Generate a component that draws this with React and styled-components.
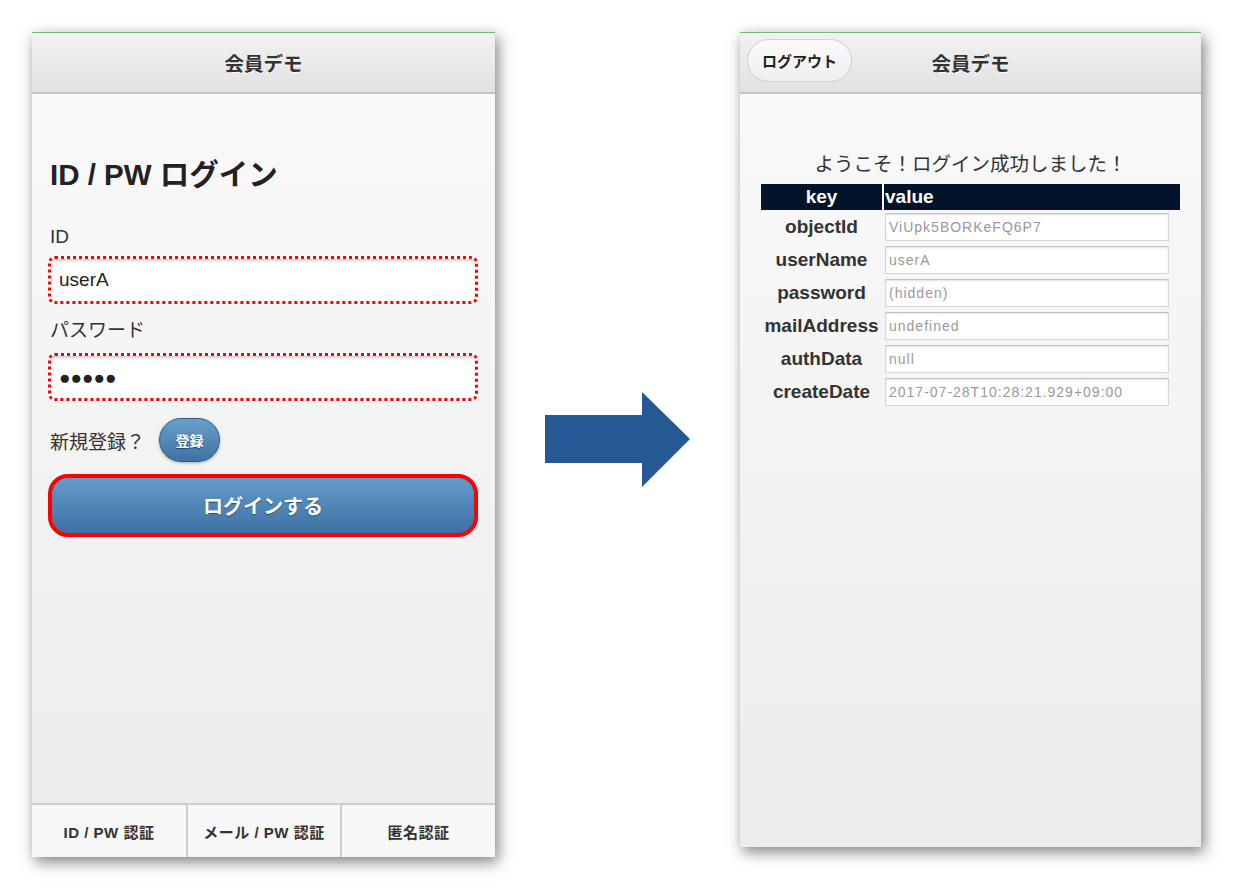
import styled, { createGlobalStyle } from "styled-components";

const GlobalStyle = createGlobalStyle`
  body {
    margin: 0;
    background: #ffffff;
    font-family: "Liberation Sans", "Noto Sans CJK JP", sans-serif;
  }
`;

const FONT = `"Liberation Sans", "Noto Sans CJK JP", sans-serif`;

const Stage = styled.div`
  display: flex;
  align-items: flex-start;
  padding: 32px 0 0 32px;
  width: 1234px;
  height: 890px;
  box-sizing: border-box;
`;

const Phone = styled.div`
  width: ${(p) => p.$w}px;
  height: ${(p) => p.$h}px;
  display: flex;
  flex-direction: column;
  border-top: 1px solid #7cb47c;
  background: linear-gradient(#fafafa, #ececec);
  box-shadow: 3px 5px 14px rgba(0, 0, 0, 0.5);
  font-family: ${FONT};
  color: #333;
  box-sizing: border-box;
`;

const Header = styled.div`
  position: relative;
  height: 61px;
  flex: none;
  display: flex;
  align-items: center;
  justify-content: center;
  background: linear-gradient(#f1f1f1, #e2e2e2);
  border-bottom: 2px solid #c4c4c4;
  box-sizing: border-box;
`;

const HeaderTitle = styled.div`
  font-size: 19.5px;
  font-weight: bold;
  color: #333;
  text-shadow: 0 1px 0 #fff;
`;

const LogoutButton = styled.div`
  position: absolute;
  left: 7px;
  top: 6px;
  width: 105px;
  height: 43px;
  border-radius: 22px;
  border: 1px solid #cfcfcf;
  background: linear-gradient(#fafafa, #efefef);
  display: flex;
  align-items: center;
  justify-content: center;
  font-size: 15px;
  font-weight: bold;
  color: #222;
  box-sizing: border-box;
`;

const Content = styled.div`
  flex: 1;
  display: flex;
  flex-direction: column;
  padding: ${(p) => p.$pad};
`;

const PageTitle = styled.h1`
  margin: 0 0 34px 0;
  font-size: 29.5px;
  font-weight: bold;
  color: #222;
  line-height: 32px;
`;

const Label = styled.div`
  font-size: 19px;
  color: #333;
  line-height: 24px;
  margin: 0 0 ${(p) => p.$mb}px 0;
`;

const Field = styled.div`
  height: 48px;
  margin: 0 -1px ${(p) => p.$mb}px -2px;
  border: 3px dotted #f00;
  border-radius: 7px;
  background: #fff;
  box-shadow: inset 0 2px 3px rgba(0, 0, 0, 0.18);
  display: flex;
  align-items: center;
  padding-left: 8px;
  font-size: 19px;
  color: #222;
  box-sizing: border-box;
`;

const Dots = styled.span`
  font-size: 19px;
  line-height: 1;
  color: #222;
`;

const SignupRow = styled.div`
  display: flex;
  align-items: center;
  gap: 14px;
  margin-bottom: 12px;
`;

const SignupText = styled.span`
  font-size: 19px;
  color: #333;
`;

const SmallBlueButton = styled.div`
  width: 61px;
  height: 44px;
  border-radius: 22px;
  border: 1px solid #2f5a86;
  background: linear-gradient(#6a9fcb, #3f72a4);
  box-shadow: 0 1px 3px rgba(0, 0, 0, 0.3);
  color: #fff;
  font-size: 14px;
  font-weight: bold;
  text-shadow: 0 1px 1px #234466;
  display: flex;
  align-items: center;
  justify-content: center;
  box-sizing: border-box;
`;

const LoginButton = styled.div`
  margin: 0 -1px 0 -2px;
  height: 63px;
  border: 4px solid #f00;
  border-radius: 20px;
  background: linear-gradient(#639cca, #3e70a3);
  color: #fff;
  font-size: 20px;
  font-weight: bold;
  text-shadow: 0 1px 1px #244a70;
  display: flex;
  align-items: center;
  justify-content: center;
  box-sizing: border-box;
`;

const Footer = styled.div`
  height: 52px;
  flex: none;
  display: grid;
  grid-template-columns: 154px 154px 1fr;
  border-top: 2px solid #cdcdcd;
  background: #f7f7f7;
`;

const Tab = styled.div`
  display: flex;
  align-items: center;
  justify-content: center;
  font-size: 15px;
  letter-spacing: 0.5px;
  font-weight: bold;
  color: #333;
  border-left: ${(p) => (p.$first ? "none" : "2px solid #cdcdcd")};
`;

const Arrow = styled.svg`
  flex: none;
  margin: 360px 50px 0 50px;
`;

const Welcome = styled.div`
  text-align: center;
  font-size: 19.5px;
  line-height: 23px;
  color: #333;
  margin-bottom: 8px;
`;

const Table = styled.div`
  display: grid;
  grid-template-columns: 121px 1fr;
`;

const HeadCell = styled.div`
  height: 26px;
  background: #03132a;
  color: #fff;
  font-size: 19px;
  font-weight: bold;
  display: flex;
  align-items: center;
  justify-content: ${(p) => (p.$center ? "center" : "flex-start")};
  padding-left: ${(p) => (p.$center ? 0 : 1)}px;
  border-left: ${(p) => (p.$center ? "none" : "2px solid #fff")};
`;

const KeyCell = styled.div`
  height: 33px;
  display: flex;
  align-items: center;
  justify-content: center;
  font-size: 19px;
  font-weight: bold;
  color: #333;
  white-space: nowrap;
`;

const ValueCell = styled.div`
  height: 33px;
  display: flex;
  align-items: center;
  padding: 0 11px 0 3px;
`;

const ValueBox = styled.div`
  flex: 1;
  height: 28px;
  background: #fff;
  border: 1px solid #d6d6d6;
  border-top-color: #c2c2c2;
  box-shadow: inset 0 1px 2px rgba(0, 0, 0, 0.12);
  display: flex;
  align-items: center;
  padding-left: 3px;
  font-size: 14px;
  color: #999;
  letter-spacing: 1px;
  box-sizing: border-box;
`;

const rows = [
  ["objectId", "ViUpk5BORKeFQ6P7"],
  ["userName", "userA"],
  ["password", "(hidden)"],
  ["mailAddress", "undefined"],
  ["authData", "null"],
  ["createDate", "2017-07-28T10:28:21.929+09:00"],
];

export default function App() {
  return (
    <>
      <GlobalStyle />
      <Stage>
        <Phone $w={463} $h={825}>
          <Header>
            <HeaderTitle>会員デモ</HeaderTitle>
          </Header>
          <Content $pad="65px 18px 0 18px">
            <PageTitle>ID / PW ログイン</PageTitle>
            <Label $mb={7}>ID</Label>
            <Field $mb={15}>userA</Field>
            <Label $mb={10}>パスワード</Label>
            <Field $mb={17}>
              <Dots>●●●●●</Dots>
            </Field>
            <SignupRow>
              <SignupText>新規登録？</SignupText>
              <SmallBlueButton>登録</SmallBlueButton>
            </SignupRow>
            <LoginButton>ログインする</LoginButton>
          </Content>
          <Footer>
            <Tab $first>ID / PW 認証</Tab>
            <Tab>メール / PW 認証</Tab>
            <Tab>匿名認証</Tab>
          </Footer>
        </Phone>

        <Arrow width="145" height="96" viewBox="0 0 145 96">
          <polygon
            points="0,23 97,23 97,0 145,47 97,95 97,71 0,71"
            fill="#245993"
          />
        </Arrow>

        <Phone $w={461} $h={815}>
          <Header>
            <LogoutButton>ログアウト</LogoutButton>
            <HeaderTitle>会員デモ</HeaderTitle>
          </Header>
          <Content $pad="59px 21px 0 21px">
            <Welcome>ようこそ！ログイン成功しました！</Welcome>
            <Table>
              <HeadCell $center>key</HeadCell>
              <HeadCell>value</HeadCell>
              {rows.map(([k, v]) => [
                <KeyCell key={k + "k"}>{k}</KeyCell>,
                <ValueCell key={k + "v"}>
                  <ValueBox>{v}</ValueBox>
                </ValueCell>,
              ])}
            </Table>
          </Content>
        </Phone>
      </Stage>
    </>
  );
}
